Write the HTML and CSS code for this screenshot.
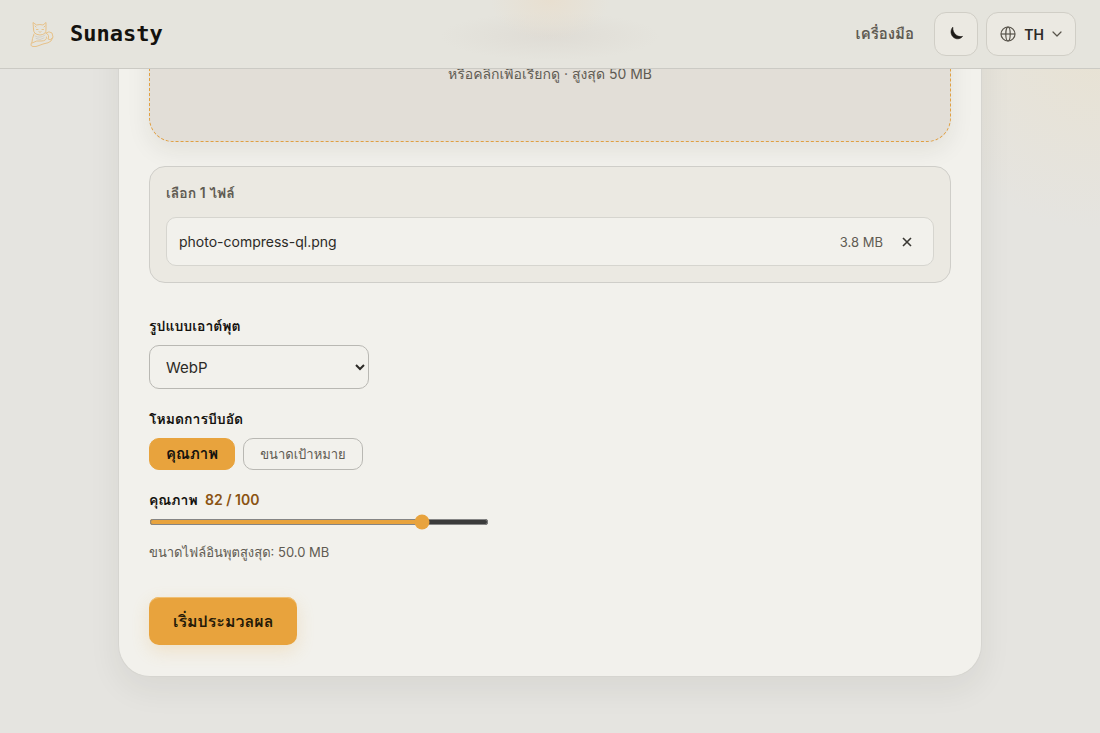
FILE: index.html
```html
<!DOCTYPE html>
<html lang="th">
<head>
    <meta charset="UTF-8">
    <meta name="viewport" content="width=device-width, initial-scale=1.0">
    <title>Sunasty</title>
    <link rel="stylesheet" href="styles.css">
</head>
<body>
    <header class="site-header">
        <a class="brand" href="#">
            <svg class="brand-logo" viewBox="0 0 28 28" fill="none" stroke="#e6bd80" stroke-width="0.9" stroke-linejoin="round" stroke-linecap="round" aria-hidden="true">
                <path d="M5.500 9 L5 2.500 L8.500 5 Q12 4 15 5 L18 2.500 L18 9 Q18.500 14.500 12 15 Q5 14.500 5.500 9Z"/>
                <path d="M8.500 9.500h1.500M14 9.500h1.500M11 11.500l1 1 1-1M7 6l1 1M17 6l-1 1"/>
                <path d="M6 14 Q4 19 4 22 Q1.500 26 5 26.500 Q8 27 11 25.500 L15 24 Q21 23 23 21 Q26.500 17 24 13 Q21 10.500 18 13"/>
                <path d="M4 23 Q9 20 13 21 Q19 21 18.500 17 M18 13 Q22 15 20 19 Q22 21 24.500 18"/>
                <path d="M7 16 Q12 19 17 15 M8 18.500 Q12 21 16 18" stroke="#d2cdc2"/>
            </svg>
            <span class="brand-name">Sunasty</span>
        </a>
        <nav class="site-nav">
            <a class="nav-link" href="#">เครื่องมือ</a>
            <button class="icon-btn" type="button" aria-label="Theme">
                <svg width="16" height="16" viewBox="0 0 16 16" aria-hidden="true">
                    <path d="M4.800 1.200 C2.400 3.800 2.400 8.200 5 10.800 C7.700 13.600 12 13.500 14.600 10.400 C12.400 10.900 9.400 10.400 7.600 8.600 C5.700 6.700 4.600 4.200 4.800 1.200Z" fill="#1c1a16" stroke="#1c1a16" stroke-width="0.6" stroke-linejoin="round"/>
                </svg>
            </button>
            <button class="lang-btn" type="button">
                <svg width="16" height="16" viewBox="0 0 16 16" fill="none" stroke="#57534a" stroke-width="1.200" aria-hidden="true">
                    <circle cx="8" cy="8" r="7"/>
                    <ellipse cx="8" cy="8" rx="2.200" ry="7"/>
                    <path d="M1 8h14"/>
                </svg>
                <span>TH</span>
                <svg width="10" height="10" viewBox="0 0 10 10" fill="none" stroke="#57534a" stroke-width="1.200" stroke-linecap="round" stroke-linejoin="round" aria-hidden="true">
                    <path d="M1 3l4 4 4-4"/>
                </svg>
            </button>
        </nav>
    </header>

    <main class="page">
        <form class="tool-card">
            <div class="dropzone">
                <p>หรือคลิกเพื่อเรียกดู · สูงสุด 50 MB</p>
            </div>

            <section class="files">
                <h2 class="files-title">เลือก 1 ไฟล์</h2>
                <div class="file-row">
                    <span class="file-name">photo-compress-ql.png</span>
                    <span class="file-size">3.8 MB</span>
                    <button class="file-remove" type="button" aria-label="Remove">
                        <svg width="10" height="10" viewBox="0 0 10 10" stroke="#3a3833" stroke-width="1.600" aria-hidden="true">
                            <path d="M1 1l8 8M9 1l-8 8"/>
                        </svg>
                    </button>
                </div>
            </section>

            <div class="field">
                <label class="field-label" for="format">รูปแบบเอาต์พุต</label>
                <select class="select" id="format">
                    <option>WebP</option>
                </select>
            </div>

            <div class="field">
                <span class="field-label" id="mode-label">โหมดการบีบอัด</span>
                <div class="chips" role="group" aria-labelledby="mode-label">
                    <button class="chip chip-active" type="button">คุณภาพ</button>
                    <button class="chip" type="button">ขนาดเป้าหมาย</button>
                </div>
            </div>

            <div class="field">
                <label class="field-label" for="quality">คุณภาพ <output class="quality-value">82 / 100</output></label>
                <input class="slider" id="quality" type="range" min="1" max="100" value="82">
            </div>

            <p class="hint">ขนาดไฟล์อินพุตสูงสุด: 50.0 MB</p>

            <button class="submit-btn" type="submit">เริ่มประมวลผล</button>
        </form>
    </main>
</body>
</html>
```
FILE: styles.css
```css
:root {
    --amber: #e8a33d;
    --ink: #14120e;
    --text: #2c2a26;
    --muted: #5f5b52;
    --line: #cfcec9;
    --surface: #f2f1ec;
    --sans: Inter, Loma, "Noto Sans Thai Looped", "Liberation Sans", sans-serif;
}

* {
    box-sizing: border-box;
}

body {
    margin: 0;
    min-height: 100vh;
    font-family: var(--sans);
    font-size: 14px;
    line-height: 20px;
    color: var(--text);
    background: radial-gradient(circle at 100% 40px, #e8e2d3 0, rgba(232, 226, 211, 0) 190px), #e5e4e0;
}

h2, p {
    margin: 0;
}

button, select {
    font-family: inherit;
    cursor: pointer;
}

.site-header {
    position: fixed;
    top: 0;
    left: 0;
    right: 0;
    z-index: 10;
    display: flex;
    align-items: center;
    justify-content: space-between;
    height: 69px;
    padding: 0 24px 0 28px;
    border-bottom: 1px solid #cbcac4;
    background: radial-gradient(ellipse 60px 40px at 50% 0, #e8dfd0 0, rgba(232, 223, 208, 0) 100%), radial-gradient(ellipse 110px 24px at 50% 36px, #dfdcd5 0, rgba(223, 220, 213, 0) 100%), #e5e4dd;
}

.brand {
    display: flex;
    align-items: center;
    gap: 14px;
    color: var(--ink);
    text-decoration: none;
}

.brand-logo {
    width: 28px;
    height: 28px;
}

.brand-name {
    font-family: "DejaVu Sans Mono", monospace;
    font-size: 22px;
    font-weight: 700;
    line-height: 28px;
}

.site-nav {
    display: flex;
    align-items: center;
    gap: 8px;
}

.nav-link {
    margin-right: 12px;
    font-size: 15px;
    font-weight: 700;
    color: var(--muted);
    text-decoration: none;
}

.icon-btn,
.lang-btn {
    display: flex;
    align-items: center;
    justify-content: center;
    height: 44px;
    border: 1px solid #d0cec6;
    border-radius: 12px;
    background: #ebe9e2;
}

.icon-btn {
    width: 44px;
    padding: 0;
}

.lang-btn {
    gap: 8px;
    min-width: 90px;
    padding: 0 12px;
    font-size: 14px;
    font-weight: 600;
    color: var(--text);
}

.page {
    padding: 0 24px 56px;
}

.tool-card {
    max-width: 864px;
    margin: 0 auto;
    padding: 0 30px 31px;
    border: 1px solid #d6d5d0;
    border-top: 0;
    border-radius: 0 0 32px 32px;
    background: var(--surface);
    box-shadow: 0 12px 32px rgba(40, 36, 26, 0.07);
}

.dropzone {
    height: 142px;
    padding-top: 64px;
    border: 1px dashed #e0a043;
    border-top: 0;
    border-radius: 0 0 24px 24px;
    text-align: center;
    color: var(--muted);
    background: #e2ded7;
    box-shadow: 0 8px 24px rgba(40, 36, 26, 0.08);
}

.files {
    margin-top: 24px;
    padding: 16px;
    border: 1px solid var(--line);
    border-radius: 16px;
    background: #ebe9e2;
}

.files-title {
    margin-bottom: 14px;
    font-size: 14px;
    font-weight: 600;
    line-height: 20px;
    color: var(--muted);
}

.file-row {
    display: flex;
    align-items: center;
    height: 49px;
    padding: 0 12px;
    border: 1px solid #d6d5cf;
    border-radius: 10px;
    background: var(--surface);
}

.file-name {
    flex: 1;
}

.file-size {
    font-size: 13px;
    color: var(--muted);
}

.file-remove {
    display: flex;
    align-items: center;
    justify-content: center;
    width: 28px;
    height: 28px;
    margin-left: 10px;
    padding: 0;
    border: 0;
    background: none;
}

.field {
    margin-top: 20px;
}

.files + .field {
    margin-top: 33px;
}

.field-label {
    display: block;
    margin-bottom: 9px;
    font-size: 14px;
    font-weight: 700;
    line-height: 20px;
    color: var(--ink);
}

.select {
    display: block;
    width: 220px;
    height: 44px;
    padding: 0 0 0 12px;
    border: 1px solid #b9b8b3;
    border-radius: 10px;
    font-size: 15px;
    color: var(--text);
    background: var(--surface);
}

.chips {
    display: flex;
    gap: 8px;
}

.chip {
    height: 32px;
    padding: 0 16px;
    border: 1px solid #b9b8b3;
    border-radius: 10px;
    font-size: 13px;
    color: var(--muted);
    background: transparent;
}

.chip-active {
    border-color: var(--amber);
    font-size: 15px;
    font-weight: 700;
    color: var(--ink);
    background: var(--amber);
}

.quality-value {
    margin-left: 4px;
    font-weight: 600;
    color: #8a5312;
}

.slider {
    display: block;
    width: 100%;
    max-width: 340px;
    height: 6px;
    margin: 0;
    accent-color: var(--amber);
}

.hint {
    margin-top: 17px;
    font-size: 13px;
    color: var(--muted);
}

.submit-btn {
    height: 48px;
    margin-top: 35px;
    padding: 0 24px;
    border: 0;
    border-radius: 10px;
    font-size: 16px;
    font-weight: 700;
    color: #241a08;
    background: var(--amber);
    box-shadow: inset 0 1px 0 #f0c074, 0 6px 18px rgba(232, 163, 61, 0.2);
}
```
